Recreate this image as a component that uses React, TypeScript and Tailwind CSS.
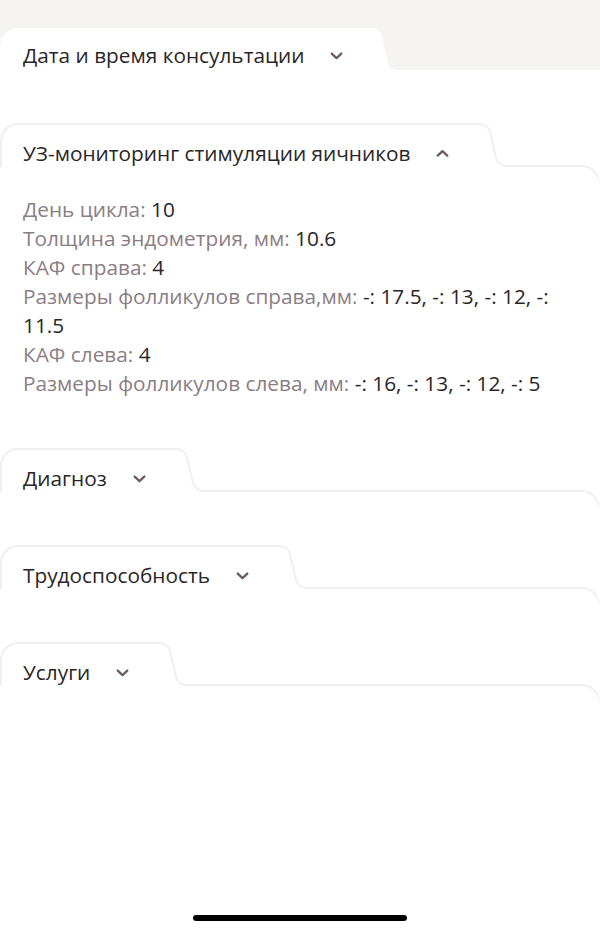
import type { ReactNode } from "react";

const font = { fontFamily: '"Open Sans", "Noto Sans", sans-serif' };

function Chevron({ up }: { up?: boolean }) {
  return (
    <svg
      className="w-[17px] h-[17px] text-[#6b5d66]"
      viewBox="0 0 16 16"
      fill="none"
      stroke="currentColor"
      strokeWidth={2.2}
      strokeLinecap="round"
      strokeLinejoin="round"
    >
      {up ? <path d="M3.5 10 8 5.8l4.5 4.2" /> : <path d="M3.5 6.2 8 10.4l4.5-4.2" />}
    </svg>
  );
}

// the S-shaped step between a tab and the line of its body
function Slope({ filled }: { filled?: boolean }) {
  return (
    <svg className="w-[34px] h-[44px] shrink-0" viewBox="0 0 34 44" fill="none">
      {filled ? (
        <path d="M0 0H4C10 0 13 2 15 8L21 35C23 41 26 42 32 42H34V44H0Z" fill="#ffffff" />
      ) : (
        <path
          d="M0 1H4C10 1 13 3 15 9L21 35C23 41 26 43 32 43H34"
          stroke="#f3eeee"
          strokeWidth={2}
        />
      )}
    </svg>
  );
}

function Section({
  title,
  open,
  filled,
  gap = 53,
  children,
}: {
  title: string;
  open?: boolean;
  filled?: boolean;
  gap?: number;
  children?: ReactNode;
}) {
  return (
    <section>
      <div className={filled ? "bg-[#f6f3f3] pt-[28px]" : ""}>
        <div className="flex items-end h-[44px]">
          <div
            className={
              filled
                ? "h-full pt-[15px] pl-[23px] pr-[22px] bg-white rounded-tl-[18px]"
                : "h-full pt-[16px] pl-[21px] pr-[24px] border-t-2 border-l-2 border-[#f3eeee] rounded-tl-[18px]"
            }
          >
            <div className="flex items-center gap-[24px] h-[24px]">
              <span className="text-[20.8px] text-[#2a2528] leading-[24px]">{title}</span>
              <Chevron up={open} />
            </div>
          </div>
          <Slope filled={filled} />
          {filled ? (
            <div className="flex-1 h-[2px] bg-white" />
          ) : (
            <div className="flex-1 h-[22px] -mb-[20px] border-t-2 border-r-2 border-[#f3eeee] rounded-tr-[18px] [mask-image:linear-gradient(to_bottom,black_40%,transparent)]" />
          )}
        </div>
      </div>
      {open ? (
        <div className="px-[23px] pt-[28px] pb-[50px]">{children}</div>
      ) : (
        <div style={{ height: gap }} />
      )}
    </section>
  );
}

function Row({ label, value, more }: { label: string; value: string; more?: string }) {
  return (
    <div>
      <span className="text-[#8c7d85]">{label}: </span>
      <span className="text-[#2a2528]">{value}</span>
      {more && <span className="block text-[#2a2528]">{more}</span>}
    </div>
  );
}

export default function App() {
  return (
    <div className="relative w-[600px] h-[933px] bg-white overflow-hidden" style={font}>
      <Section title="Дата и время консультации" filled gap={51} />
      <Section title="УЗ-мониторинг стимуляции яичников" open>
        <div className="text-[20.8px] leading-[29px]">
          <Row label="День цикла" value="10" />
          <Row label="Толщина эндометрия, мм" value="10.6" />
          <Row label="КАФ справа" value="4" />
          <Row label="Размеры фолликулов справа,мм" value="-: 17.5, -: 13, -: 12, -:" more="11.5" />
          <Row label="КАФ слева" value="4" />
          <Row label="Размеры фолликулов слева, мм" value="-: 16, -: 13, -: 12, -: 5" />
        </div>
      </Section>
      <Section title="Диагноз" />
      <Section title="Трудоспособность" />
      <Section title="Услуги" />
      <div className="absolute bottom-[12px] left-1/2 -translate-x-1/2 w-[214px] h-[6px] rounded-full bg-black" />
    </div>
  );
}
